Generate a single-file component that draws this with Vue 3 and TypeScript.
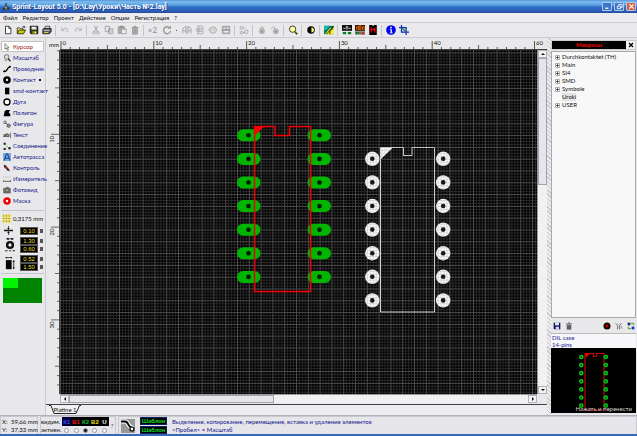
<script setup lang="ts">
import { ref } from 'vue'

interface ToolItem { icon: string; label: string; arrow?: boolean }

const ic: Record<string, string> = {
  new: '<path d="M3 1.5h4l2.500 2.500v6.500h-6.500z" fill="#fff" stroke="#222"/><path d="M7 1.500v2.500h2.500" fill="none" stroke="#222"/>',
  open: '<path d="M1.500 10V3.500h3l1 1h3V6" fill="#ff6" stroke="#222"/><path d="M1.500 10.500l2-4.500h8l-2.500 4.500z" fill="#cc0" stroke="#222"/><path d="M7 2.500q2-2 3.500 0M10.500 1v2h-2" fill="none" stroke="#222" stroke-width=".8"/>',
  save: '<path d="M1.500 1.500h9v9h-8l-1-1z" fill="#332" stroke="#000"/><path d="M3 2h6v3.500h-6z" fill="#e8e8e8"/><path d="M4 7.500h5v3h-5z" fill="#990"/><path d="M7 8h1.500v2h-1.500z" fill="#fff"/>',
  print: '<path d="M4 1.500h5.500l-1 3h-5.500z" fill="#fff" stroke="#333"/><path d="M1 5l2-1h8v4l-2 2.500h-8z" fill="#555" stroke="#222"/><path d="M2 6.500h7" stroke="#ddd"/><path d="M2.500 9h5" stroke="#ee4"/>',
  undo: '<path d="M2 3v3.500h3.500M2.500 6q3-3.500 6-1.500q2 2-.5 4" fill="none" stroke="#aaaab0"/>',
  redo: '<path d="M10 3v3.500h-3.500M9.500 6q-3-3.500-6-1.500q-2 2 .5 4" fill="none" stroke="#aaaab0"/>',
  cut: '<path d="M4 1l3.500 7M8 1l-3.500 7" stroke="#9a9aa0" fill="none"/><circle cx="3.500" cy="9.300" r="1.500" fill="none" stroke="#9a9aa0"/><circle cx="8.300" cy="9.300" r="1.500" fill="none" stroke="#9a9aa0"/>',
  copy: '<path d="M1.500 1.500h5v6.500h-5z M5.500 4.500h5v6h-5z" fill="#e5e5e8" stroke="#9a9aa0"/><path d="M6.500 6.500h3M6.500 8.500h3" stroke="#aaa" stroke-width=".7"/>',
  paste: '<path d="M1.500 2h7.500v8h-7.500z" fill="#aaa" stroke="#999"/><path d="M3.500 1h3.500v2h-3.500z" fill="#888"/><path d="M5.500 5h5.500v5.500h-5.500z" fill="#eee" stroke="#999"/>',
  trash: '<path d="M3 4h6v7h-6z" fill="#bbb" stroke="#999"/><path d="M2 3h8M4.500 1.500h3M5 5v5M7 5v5" stroke="#888" fill="none"/>',
  rotate: '<path d="M9 3.300A4.200 4.200 0 1 0 10.200 7" fill="none" stroke="#999" stroke-width="1.600"/><path d="M6.800 4.500h4v-4z" fill="#999"/>',
  mirrorH: '<path d="M6 1v10" stroke="#999" stroke-dasharray="2 1"/><path d="M1 10V6q0-4 3.500-4v8M11 10V6q0-4-3.500-4v8M1 7h3M8 7h3" fill="none" stroke="#a0a0a6"/>',
  mirrorV: '<path d="M1 6h10" stroke="#999" stroke-dasharray="2 1"/><path d="M2 1.500h6q2 0 2 1.500t-2 1.500h-6M2 10.500h6q2 0 2-1.500t-2-1.500h-6M4 2v8" fill="none" stroke="#a0a0a6"/>',
  align: '<circle cx="6" cy="6" r="4" fill="none" stroke="#aaa"/><path d="M0 6h12M2 4h8M3 8.500h6" stroke="#aaa" stroke-dasharray="2 1"/>',
  snap: '<path d="M1 1h10v10H1z" fill="#aaaab0"/><path d="M3 3h2v2H3zM7 3h2v2H7zM3 7h6v2H3z" fill="#eee"/><path d="M1 6h10" stroke="#888"/>',
  group: '<path d="M1.500 2h3v3h-3zM1.500 8h3v2.500h-3zM7 6h3.500v4h-3.500z" fill="#eee" stroke="#a8a8ac"/><path d="M5 3.500h2M5 9h2" stroke="#999"/>',
  lock: '<path d="M4 6V3.500q2-3 4 0V6" fill="none" stroke="#aaa"/><circle cx="6" cy="7.500" r="3" fill="#bbb" stroke="#aaa"/><path d="M5 7h2v2h-2z" fill="#888"/>',
  unlock: '<path d="M2 5V3.500q2-3 4 0V6" fill="none" stroke="#aaa"/><circle cx="7" cy="7.500" r="3" fill="#bbb" stroke="#aaa"/><path d="M6 7h2v2h-2z" fill="#888"/>',
  zoom: '<circle cx="5.500" cy="5" r="3.800" fill="#ffff9c" stroke="#222"/><path d="M8.500 8l2.500 3" stroke="#220" stroke-width="2"/><path d="M9 8l1.500 2" stroke="#dd0" stroke-width=".8"/>',
  contrast: '<circle cx="6" cy="6" r="4.500" fill="#000"/><path d="M6.500 3a3 3 0 0 1 0 6z" fill="#ff6"/>',
  photo: '<path d="M0 1h12v10H0z" fill="#087a50"/><path d="M0 1h7L3 6H0z" fill="#19b5b5"/><path d="M1 11l6-7 5-1v8z" fill="#f3ed27"/><path d="M3 11l8-9M7 11V7l4-3" stroke="#111" fill="none"/>',
  drc: '<path d="M0 0h12v7H0z" fill="#111"/><path d="M1.500 4h3M7.500 4h3M6 1v5M4.500 2.500h3" stroke="#ddd"/><path d="M1 8.500h4v2.500H1zM7 8.500h4v2.500H7z" fill="#087a18"/>',
  macro: '<path d="M0 0h12v7H0z" fill="#331300"/><path d="M2 6V2h2v4M5 6V1h2v5M9 6V2h2v4" stroke="#ff7500" fill="none"/><path d="M0 7.500h12v4H0z" fill="#777"/><path d="M1 8.500h4v2H1z" fill="#173"/><path d="M8 8.500h3v3H8z" fill="#d32"/>',
  chip: '<path d="M1.500 0h9v12h-9z" fill="#000"/><path d="M4 9V4l2 2 2-2v5" fill="none" stroke="#e00" stroke-width="1.500"/><path d="M5 0h2v1H5z" fill="#ddd"/>',
  info: '<circle cx="6" cy="6" r="5.800" fill="#0000f0"/><path d="M5 2h2v2H5zM4.500 5H7v4h1v1H4.500V9h1V6h-1z" fill="#fff"/>',
  crop: '<path d="M3 0v8.500h9M0 3h8.500v9" fill="none" stroke="#1521c0" stroke-width="1.500"/><path d="M3 3l6 6" stroke="#0b8b40" stroke-width="1.500"/>',
  cursor: '<path d="M3 1v8l2-1.500 1.800 3.500 1.400-.8-1.700-3.200h2.500z" fill="#fff" stroke="#222" stroke-width=".8"/>',
  scale: '<circle cx="5.500" cy="4.500" r="3.500" fill="#d8e0e8" stroke="#444"/><path d="M8 7l3 4" stroke="#222" stroke-width="2"/><path d="M2 10h4" stroke="#777"/>',
  track: '<path d="M1 10q4 0 5-3t5-5" fill="none" stroke="#000" stroke-width="2"/><circle cx="2" cy="9.500" r="1.500"/><circle cx="10.500" cy="2.500" r="1.300"/>',
  pad: '<circle cx="6" cy="6" r="3.700" fill="#fff" stroke="#000" stroke-width="4"/>',
  smd: '<path d="M3 1h6.500v10H3z"/>',
  arc: '<circle cx="6" cy="6" r="4.500" fill="#fff" stroke="#000" stroke-width="2"/>',
  poly: '<path d="M1 11l1.500-7.500L5 1.500h6L8.500 5 11 8v3z"/>',
  shape: '<circle cx="3" cy="3.500" r="2" fill="none" stroke="#333"/><circle cx="8.500" cy="8.500" r="2.500" fill="#999" stroke="#333"/><path d="M4 4l4 4" stroke="#333"/>',
  link: '<path d="M1 1h3v3H1zM8 8h3.500v3H8zM1 9h3v3H1z" fill="#111"/><path d="M3 3l6 6M3 10l4-4" stroke="#18b538" fill="none" stroke-dasharray="2 1"/>',
  auto: '<path d="M0 0h12v12H0z" fill="#7ca9df"/><path d="M2 11L5 1.500h2L10.500 11M3.500 8h5.500" stroke="#15419a" fill="none" stroke-width="1.600"/>',
  test: '<path d="M1 1l3 1 5 6 1 3-3-1-5-5z" fill="#222"/><path d="M3 4l3 3" stroke="#e12" stroke-width="2"/><path d="M8 9l2 2" stroke="#1a6"/>',
  measure: '<path d="M0 3h12" stroke="#bbb"/><path d="M0 7.500v2M11.500 7.500v2M0 9.500h12" stroke="#222"/>',
  camera: '<path d="M1 3.500h3l1-1.500h3l1 1.500h2v7H1z" fill="#777" stroke="#555"/><circle cx="6" cy="6.500" r="2.500" fill="#b49d88" stroke="#444"/>',
  mask: '<circle cx="6" cy="6" r="3.700" fill="#fff" stroke="#f00000" stroke-width="3.800"/>',
  grid: '<path d="M0 0h12v12H0z" fill="#fff59a"/><path d="M2.500 0v12M6 0v12M9.500 0v12M0 2.500h12M0 6h12M0 9.500h12" stroke="#b8a93d"/>',
  width: '<path d="M0 6h12" stroke="#111" stroke-width="2"/><path d="M6 0v4M6 12V8" stroke="#222"/><path d="M4 3h4L6 5zM4 9h4L6 7z"/>',
  padsize: '<path d="M2 1h8M2 1l2-1v2zM10 1L8 0v2z" stroke="#111" stroke-width=".8"/><circle cx="6" cy="8.500" r="3.500" fill="#eee" stroke="#111" stroke-width="3"/><path d="M0 15.500h3M9 15.500h3M5 15.500h2" stroke="#222" stroke-width="1.400"/>',
  smdsize: '<path d="M1 5h7v11H1z"/><path d="M1 2h7M10.500 6v9" stroke="#222"/><path d="M9 7l1.500-2L12 7zM9 14l1.500 2 1.500-2zM0 2l2-1v2zM9 2L7 1v2z"/>',
  disk: '<path d="M1 1h10v10H2l-1-1z" fill="#10106a"/><path d="M3 1h6v4H3z" fill="#e8e8e8"/><path d="M4 7h5v4H4z" fill="#d8d8e8"/>',
  bin: '<path d="M2.500 4h7v7.500h-7z" fill="#777"/><path d="M1.500 2.800h9M4.500 1.500h3M4.500 5v6M7.500 5v6" stroke="#333" fill="none"/>',
  record: '<circle cx="6" cy="6" r="5.300" fill="#220000"/><circle cx="6" cy="6" r="1.700" fill="#d00"/>',
  fork: '<path d="M1 2l3 3v6M7 11V5l3-3" stroke="#333" fill="none"/><path d="M6 2l2 2M9 6l2 4" stroke="#77a" fill="none"/>',
  swap: '<path d="M1 1h4v4H1z" fill="#226"/><path d="M7 7h4v4H7z" fill="#22c"/><path d="M6 2h4v3M6 10H2V7" stroke="#1a2" fill="none" stroke-width="1.400"/>',
}

const menus = ['Файл', 'Редактор', 'Проект', 'Действие', 'Опции', 'Регистрация', '?']
const toolbar: string[][] = [
  ['new', 'open', 'save', 'print'],
  ['undo', 'redo'],
  ['cut', 'copy', 'paste', 'trash'],
  ['x2', 'rotate', 'mirrorH', 'mirrorV', 'align', 'snap'],
  ['group'],
  ['lock', 'unlock'],
  ['zoom'],
  ['contrast'],
  ['photo'],
  ['drc', 'macro', 'chip'],
  ['info', 'crop'],
]
const tools: ToolItem[] = [
  { icon: 'cursor', label: 'Курсор' },
  { icon: 'scale', label: 'Масштаб' },
  { icon: 'track', label: 'Проводник' },
  { icon: 'pad', label: 'Контакт', arrow: true },
  { icon: 'smd', label: 'smd-контакт' },
  { icon: 'arc', label: 'Дуга' },
  { icon: 'poly', label: 'Полигон' },
  { icon: 'shape', label: 'Фигура' },
  { icon: 'text', label: 'Текст' },
  { icon: 'link', label: 'Соединение' },
  { icon: 'auto', label: 'Автотрасса' },
  { icon: 'test', label: 'Контроль' },
  { icon: 'measure', label: 'Измеритель' },
  { icon: 'camera', label: 'Фотовид' },
  { icon: 'mask', label: 'Маска' },
]
const active = ref('cursor')

const sizes = ref([
  { icon: 'width', box: '0 0 12 12', values: ['0.10'] },
  { icon: 'padsize', box: '0 0 12 17', values: ['1.30', '0.60'] },
  { icon: 'smdsize', box: '0 0 12 17', values: ['0.52', '1.50'] },
])

const layers = [
  { name: 'К1', cls: 'k1' },
  { name: 'В1', cls: 'b1' },
  { name: 'К2', cls: 'k2' },
  { name: 'В2', cls: 'b2' },
  { name: 'U', cls: 'u' },
]
const layer = ref('К2')

const tree = [
  { name: 'Durchkontaktet (TH)', open: true },
  { name: 'Main', open: true },
  { name: 'SI4', open: true },
  { name: 'SMD', open: true },
  { name: 'Symbole', open: true },
  { name: 'Uroki', open: false },
  { name: 'USER', open: true },
]

const mm = 9.28
const endX = window.innerWidth - 163
const columns = Array.from({ length: Math.floor(endX / mm) }, (_, i) => i)
const rows = Array.from({ length: Math.floor((window.innerHeight - 90) / mm) + 1 }, (_, i) => i)
const tickLength = (i: number) => (i % 10 === 0 ? 8 : i % 5 === 0 ? 4 : 2)
const pins = Array.from({ length: 7 }, (_, i) => i)
const pitch = 23.6
</script>

<template>
  <div class="app">
    <header class="title">
      <svg class="logo" viewBox="0 0 12 12"><path d="M5 0h2v5l4 2v3H8L6 8l-2 3H1V8l4-2z" fill="#3b3530" /><circle cx="6" cy="7" r="1.500" fill="#c9b48a" /></svg>
      <h1>Sprint-Layout 5.0 - [D:\Lay\Уроки\Часть №2.lay]</h1>
      <button class="win" aria-label="Свернуть"><svg viewBox="0 0 8 8"><path d="M1.500 6h3.500" stroke="#fff" stroke-width="1.500" /></svg></button>
      <button class="win" aria-label="Восстановить"><svg viewBox="0 0 8 8"><path d="M3 3V1.500h4V5H5.500M1.500 3.500h3.500v3H1.500z" fill="none" stroke="#fff" /></svg></button>
      <button class="win close" aria-label="Закрыть"><svg viewBox="0 0 8 8"><path d="M1.500 1.500l5 5M6.500 1.500l-5 5" stroke="#fff" stroke-width="1.300" /></svg></button>
    </header>

    <nav class="menu">
      <button v-for="m in menus" :key="m">{{ m }}</button>
    </nav>

    <div class="toolbar">
      <div v-for="(g, gi) in toolbar" :key="gi" class="group">
        <button v-for="b in g" :key="b" :aria-label="b" :class="{ wide: b === 'rotate' }">
          <span v-if="b === 'x2'" class="x2">×2</span>
          <svg v-else viewBox="0 0 12 12" v-html="ic[b]"></svg>
          <i v-if="b === 'rotate'" class="dot"></i>
        </button>
      </div>
    </div>

    <main class="body">
      <aside class="left">
        <div class="tools">
          <button v-for="t in tools" :key="t.icon" :class="{ on: active === t.icon }" @click="active = t.icon">
            <span v-if="t.icon === 'text'" class="abl">ab|</span>
            <svg v-else viewBox="0 0 12 12" v-html="ic[t.icon]"></svg>
            <span>{{ t.label }}</span>
            <i v-if="t.arrow" class="caret"></i>
          </button>
        </div>
        <div class="params">
          <button class="gridsize"><svg viewBox="0 0 12 12" v-html="ic.grid"></svg>0,3175 mm</button>
          <div v-for="s in sizes" :key="s.icon" class="size">
            <svg :viewBox="s.box" v-html="ic[s.icon]"></svg>
            <div class="values">
              <div v-for="(_, k) in s.values" :key="k" class="value">
                <input v-model="s.values[k]" type="text" :aria-label="s.icon + ' ' + k">
                <button aria-label="spin"></button>
              </div>
            </div>
          </div>
        </div>
        <div class="overview"><div></div></div>
      </aside>

      <section class="center">
        <div class="unit">mm</div>
        <svg class="ruler-x">
          <g v-for="i in columns" :key="i">
            <line :x1="1 + i * mm" :x2="1 + i * mm" :y1="11 - tickLength(i === 50 ? 1 : i)" y2="11" stroke="#555" />
            <text v-if="i % 10 === 0 && i < 50" :x="2.5 + i * mm" y="7">{{ i }}</text>
          </g>
          <line :x1="endX + .5" :x2="endX + .5" y1="3" y2="11" stroke="#555" />
          <text :x="endX + 2" y="7">60</text>
        </svg>
        <svg class="ruler-y">
          <g v-for="i in rows" :key="i">
            <line :y1="i * mm - 8.500" :y2="i * mm - 8.500" :x1="13 - tickLength(i)" x2="13" stroke="#666" />
            <text v-if="i % 10 === 0 && i > 0" :transform="`translate(8 ${i * mm}) rotate(-90)`">{{ i }}</text>
          </g>
        </svg>
        <svg class="board">
          <defs>
            <pattern id="grid" x="0" y="2.500" width="11.800" height="11.800" patternUnits="userSpaceOnUse">
              <path d="M3.450 0v11.800M6.400 0v11.800M9.350 0v11.800M0 3.450h11.800M0 6.400h11.800M0 9.350h11.800" stroke="#2a2a2a" stroke-width=".9" />
              <path d="M.5 0v11.800M0 .5h11.800" stroke="#4c4c4c" />
            </pattern>
          </defs>
          <rect width="100%" height="100%" fill="#000" />
          <rect width="100%" height="100%" fill="url(#grid)" />
          <g v-for="p in pins" :key="'g' + p" fill="#00b400">
            <rect x="177" :y="79.300 + p * pitch" width="23.500" height="12" rx="6" />
            <rect x="247.500" :y="79.300 + p * pitch" width="23.500" height="12" rx="6" />
            <circle cx="188.500" :cy="85.300 + p * pitch" r="2.300" fill="#001800" />
            <circle cx="259.500" :cy="85.300 + p * pitch" r="2.300" fill="#001800" />
          </g>
          <path d="M194.500 76.500H215V85.500H229.500V76.500H250.500V241.500H194.500z" fill="none" stroke="#f00000" stroke-width="1.500" />
          <path d="M195 77h8.500l-8.500 8.500z" fill="#f00" />
          <g v-for="p in pins" :key="'w' + p" fill="#fff">
            <circle cx="312.300" :cy="108.800 + p * pitch" r="7.200" />
            <circle cx="383.200" :cy="108.800 + p * pitch" r="7.200" />
            <circle cx="312.300" :cy="108.800 + p * pitch" r="2.300" fill="#111" />
            <circle cx="383.200" :cy="108.800 + p * pitch" r="2.300" fill="#111" />
          </g>
          <path d="M320.500 97.500H343.500V105.500H352V97.500H374.500V262H320.500z" fill="none" stroke="#ddd" />
          <path d="M321 98h11.500l-11.500 11z" fill="#fff" />
          <rect x="300" y="95" width="100" height="170" fill="url(#grid)" opacity=".22" />
        </svg>
        <div class="vscroll">
          <button aria-label="Вверх"><i class="up"></i></button>
          <div class="thumb"></div>
          <button class="end" aria-label="Вниз"><i class="down"></i></button>
        </div>
        <div class="hscroll">
          <button aria-label="Влево"><i class="prev"></i></button>
          <div class="thumb"></div>
          <button class="end" aria-label="Вправо"><i class="next"></i></button>
        </div>
        <div class="tabs">
          <button>
            <svg viewBox="0 0 32 9"><path d="M0 .5h2L5 8.500h22L30.500 .5h1.500" fill="#f2f2f4" stroke="#222" /></svg>
            <span>Platine 1</span>
          </button>
        </div>
      </section>

      <div class="splitter"></div>

      <aside class="right">
        <div class="macro-head"><h2>Макросы</h2><button aria-label="Закрыть">
          <svg viewBox="0 0 8 8"><path d="M2 2l4 4M6 2L2 6" stroke="#000" stroke-width="1.300" /></svg></button></div>
        <ul class="tree">
          <li v-for="n in tree" :key="n.name" :class="{ sel: !n.open }">
            <button v-if="n.open" :aria-label="n.name"><svg viewBox="0 0 5 5"><path d="M.5 .5h4v4h-4z" fill="#fff" stroke="#999" stroke-width=".8" /><path d="M1.200 2.500h2.600M2.500 1.200v2.600" stroke="#222" stroke-width=".8" /></svg></button>
            <i v-else></i>
            <span>{{ n.name }}</span>
          </li>
        </ul>
        <div class="macro-bar">
          <button v-for="b in ['disk', 'bin', 'record', 'fork', 'swap']" :key="b" :aria-label="b" :class="b"><svg viewBox="0 0 12 12" v-html="ic[b]"></svg></button>
        </div>
        <p class="desc">DIL case<br>14-pins</p>
        <div class="preview">
          <svg viewBox="0 0 84 65">
            <path d="M33.500 5.500H42v3h3v-3h7.500V62H33.500z" fill="none" stroke="#c80000" stroke-width="1.200" />
            <path d="M34 6h4l-4 4z" fill="#f00" />
            <g v-for="p in pins" :key="p" fill="#031" stroke="#00c818" stroke-width="1.500">
              <circle cx="29.800" :cy="9 + p * 8.1" r="1.600" />
              <circle cx="54.300" :cy="9 + p * 8.1" r="1.600" />
            </g>
          </svg>
          <span>Нажать и перенести</span>
        </div>
      </aside>
    </main>

    <footer class="status">
      <div class="pos"><span>X:</span><span>59,66 mm</span><span>Y:</span><span>37,33 mm</span></div>
      <div class="layers">
        <span>видим.</span>
        <div class="names"><button v-for="l in layers" :key="l.name" :class="l.cls">{{ l.name }}</button></div>
        <button class="help">?</button>
        <span>активн.</span>
        <div class="radios"><input v-for="l in layers" :key="l.name" v-model="layer" type="radio" name="layer" :value="l.name" :aria-label="l.name"></div>
      </div>
      <div class="hints">
        <button class="mode" aria-label="Маска"><svg viewBox="0 0 14 14"><path d="M0 0h14v14H0z" fill="#999" /><path d="M0 2.500h4q2 0 3 2.500t5 4" fill="none" stroke="#fff" stroke-width="4" /><path d="M0 2.500h4q2 0 3 2.500t4 4" fill="none" stroke="#000" stroke-width="2" /><circle cx="11" cy="10" r="2" fill="#fff" stroke="#000" stroke-width="1.200" /></svg></button>
        <div class="templates"><button>Шаблон</button><button>Шаблон</button></div>
        <p>Выделение, копирование, перемещение, вставка и удаление элементов<br>&lt;Пробел&gt; = Масштаб</p>
      </div>
    </footer>
  </div>
</template>

<style>
html, body { height: 100%; margin: 0; }
#app { height: 100%; }
</style>

<style scoped>
.app {
  display: flex;
  flex-direction: column;
  min-height: 100vh;
  height: 100%;
  box-sizing: border-box;
  border-bottom: 2px solid #3a68b8;
  background: #e8e8ea;
  color: #111;
  font: 6px/8px Lato, "Liberation Sans", Arial, sans-serif;
}
button { margin: 0; padding: 0; border: 0; background: none; color: inherit; font: inherit; display: flex; align-items: center; justify-content: center; }
h1, h2, p, ul { margin: 0; padding: 0; font: inherit; list-style: none; }
svg { display: block; flex: none; }

.title { flex: none; height: 13px; display: flex; align-items: center; gap: 2px; padding: 0 1px 0 2px; background: linear-gradient(#5b93d8 0, #7cbcf0 2px, #5ba0e0 5px, #2f6fc8 7px, #2c56b0 12px, #234790 13px); }
.title h1 { flex: 1; color: #fff; font: bold 7px/12px Roboto, "Liberation Sans", Arial, sans-serif; text-shadow: 1px 1px 0 #234790; white-space: nowrap; }
.logo { width: 8px; height: 8px; }
.win { width: 10px; height: 9px; border: 1px solid #a8ccf0; border-radius: 1px; background: #3c74c8; box-sizing: border-box; }
.win svg { width: 7px; height: 7px; }
.close { background: #e0603c; }

.menu { flex: none; height: 10px; box-sizing: border-box; padding: 0 3px; display: flex; gap: 5px; background: #ececee; border-bottom: 1px solid #cfcfd4; }
.menu button { white-space: nowrap; }

.toolbar { flex: none; height: 15px; box-sizing: border-box; display: flex; padding-left: 1px; border-bottom: 1px solid #cfc9d4; background: #e9e9eb; }
.group { display: flex; align-items: center; }
.group + .group::before { content: ""; width: 1px; height: 11px; margin: 0 2px; background: #c4c4ca; }
.group button { width: 13px; height: 13px; gap: 2px; }
.group button.wide { width: 21px; }
.group svg { width: 10px; height: 10px; }
.x2 { color: #888; font-size: 8px; }
.dot { width: 1px; height: 1px; margin-left: 2px; background: #555; }

.body { flex: 1; min-height: 0; display: flex; }

.left { width: 46px; flex: none; border-right: 1px solid #cacad2; padding: 3px 0 0; box-sizing: border-box; }
.tools { padding: 0 1px; }
.tools button { width: 100%; height: 11px; box-sizing: border-box; padding: 0 1px; gap: 2px; justify-content: flex-start; color: #15158c; white-space: nowrap; border: 1px solid transparent; }
.tools button.on { color: #a01010; background: #fff; border-color: #c2c2c2; border-radius: 1px; }
.tools svg, .abl { width: 8px; height: 8px; flex: none; }
.abl { color: #111; font-weight: bold; }
.caret { width: 2px; height: 2px; background: #111; margin-left: 1px; }
.params { margin: 4px 1px 0; padding: 2px 1px; border-top: 1px solid #c4c4cc; border-bottom: 1px solid #c4c4cc; display: flex; flex-direction: column; gap: 2px; }
.gridsize { height: 11px; gap: 2px; justify-content: flex-start; white-space: nowrap; }
.gridsize svg { width: 9px; height: 9px; }
.size { display: flex; align-items: center; justify-content: space-between; padding: 0 0 0 2px; }
.size > svg { width: 12px; height: 14px; }
.size:nth-child(2) > svg { width: 9px; height: 9px; }
.values { display: flex; flex-direction: column; }
.value { display: flex; align-items: center; gap: 2px; }
.value input { width: 18px; height: 8px; box-sizing: border-box; padding: 0; border: 1px solid #555; background: #000; color: #e8df1c; font: 6px/6px "Liberation Sans", Arial, sans-serif; text-align: center; }
.value button { width: 3px; height: 4px; background: #555; }
.overview { margin: 4px 3px 0; height: 25px; background: #008400; }
.overview div { width: 15px; height: 10px; background: #00f400; }

.center { flex: 1; min-width: 0; display: grid; grid-template-columns: 14px minmax(0, 1fr) 10px; grid-template-rows: 12px minmax(0, 1fr) 9px 12px; }
.unit { padding: 3px 0 0 3px; }
.ruler-x { grid-column: 2 / -1; width: 100%; height: 12px; overflow: hidden; border-bottom: 1px solid #444; box-sizing: border-box; }
.ruler-x text, .ruler-y text { font-size: 6px; fill: #222; }
.ruler-y { width: 14px; height: 100%; overflow: hidden; border-right: 1px solid #444; box-sizing: border-box; }
.board { width: 100%; height: 100%; overflow: hidden; }
.vscroll, .hscroll { display: flex; background: #f1f1f3; }
.vscroll { flex-direction: column; border-left: 1px solid #999; }
.hscroll { grid-column: 2; border-top: 1px solid #999; }
.vscroll button, .hscroll button { width: 9px; height: 8px; flex: none; background: #f3f3f5; border: 1px solid #b2b2b8; box-sizing: border-box; }
.thumb { background: #e6e6ea; border: 1px solid #a2a2ac; box-sizing: border-box; }
.vscroll .thumb { flex: 0 1 37%; }
.hscroll .thumb { flex: 0 1 43%; }
.vscroll .end { margin-top: auto; }
.hscroll .end { margin-left: auto; }
.up, .down, .prev, .next { width: 0; height: 0; border: 2px solid transparent; }
.up { border-top: 0; border-bottom-color: #111; }
.down { border-bottom: 0; border-top-color: #111; }
.prev { border-left: 0; border-right-color: #111; }
.next { border-right: 0; border-left-color: #111; }
.tabs { grid-column: 1 / -1; border-top: 1px solid #444; margin-top: 1px; padding-left: 3px; background: #ededef; }
.tabs button { display: grid; }
.tabs svg { width: 32px; height: 9px; grid-area: 1 / 1; }
.tabs span { grid-area: 1 / 1; text-align: center; white-space: nowrap; }

.splitter { width: 4px; flex: none; background: repeating-linear-gradient(45deg, #c8c8cc 0 1px, #ececee 1px 3px); }
.right { width: 86px; flex: none; display: flex; flex-direction: column; padding: 2px 1px 2px 0; box-sizing: border-box; }
.macro-head { flex: none; height: 10px; box-sizing: border-box; display: flex; background: #000; color: #f00; text-align: center; border: 1px solid #ccc; }
.macro-head h2 { flex: 1; font-weight: bold; }
.macro-head button { width: 9px; background: #f3f3f3; }
.macro-head svg { width: 8px; height: 8px; }
.tree { flex: 1; min-height: 0; margin-top: 1px; padding: 1px 2px; border: 1px solid #aaa; background: #f8f8f9; }
.tree li { display: flex; align-items: center; gap: 2px; height: 8px; white-space: nowrap; }
.tree button, .tree i { width: 5px; height: 5px; flex: none; margin-left: 1px; }
.tree svg { width: 5px; height: 5px; }
.tree .sel span { background: #e4e4e6; }
.macro-bar { flex: none; height: 15px; display: flex; align-items: center; gap: 3px; padding: 0 1px; }
.macro-bar button { width: 9px; height: 9px; }
.macro-bar svg { width: 8px; height: 8px; }
.macro-bar .record { margin-left: auto; }
.desc { flex: none; height: 15px; line-height: 7px; padding: 0 1px; background: #f7f7f9; border-top: 1px solid #bbb; box-sizing: border-box; color: #1a1a90; }
.preview { flex: none; height: 65px; background: #000; display: grid; }
.preview svg { width: 100%; height: 65px; grid-area: 1 / 1; }
.preview span { grid-area: 1 / 1; align-self: end; text-align: right; color: #d4d4d4; padding-right: 4px; white-space: nowrap; }

.status { flex: none; height: 19px; display: flex; gap: 2px; border-top: 1px solid #b4b0bc; box-sizing: border-box; background: #e6e6ea; }
.status > div { border: 1px solid #c8c8d0; border-bottom: 0; box-sizing: border-box; }
.pos { width: 38px; display: grid; grid-template-columns: 9px 1fr; align-content: center; padding-left: 1px; white-space: nowrap; }
.layers { width: 76px; display: grid; grid-template-columns: 21px 47px 6px; grid-template-rows: 9px 8px; align-items: center; }
.names, .radios { display: flex; height: 9px; }
.names { background: #000; }
.names button { flex: 1; font: bold 6px/8px "Liberation Sans", Arial, sans-serif; }
.k1 { color: #3446ff; background: #000040; }
.b1 { color: #f01010; }
.k2 { color: #10c030; }
.b2 { color: #e8e020; }
.u { color: #fff; }
.radios { align-items: center; justify-content: space-around; }
.radios input { appearance: none; width: 5px; height: 5px; margin: 0; border: 1px solid #999; border-radius: 50%; background: #fff; }
.radios input:checked { background: #111; }
.help { grid-row: 1 / 3; grid-column: 3; color: #446; }
.hints { flex: 1; display: flex; align-items: center; gap: 5px; padding: 0 2px; min-width: 0; }
.mode svg { width: 14px; height: 14px; }
.templates { width: 27px; display: flex; flex-direction: column; gap: 1px; }
.templates button { width: 100%; height: 8px; background: #000; border: 1px solid #126; color: #10e030; font-weight: bold; box-sizing: border-box; }
.hints p { color: #15158c; white-space: nowrap; }
</style>
